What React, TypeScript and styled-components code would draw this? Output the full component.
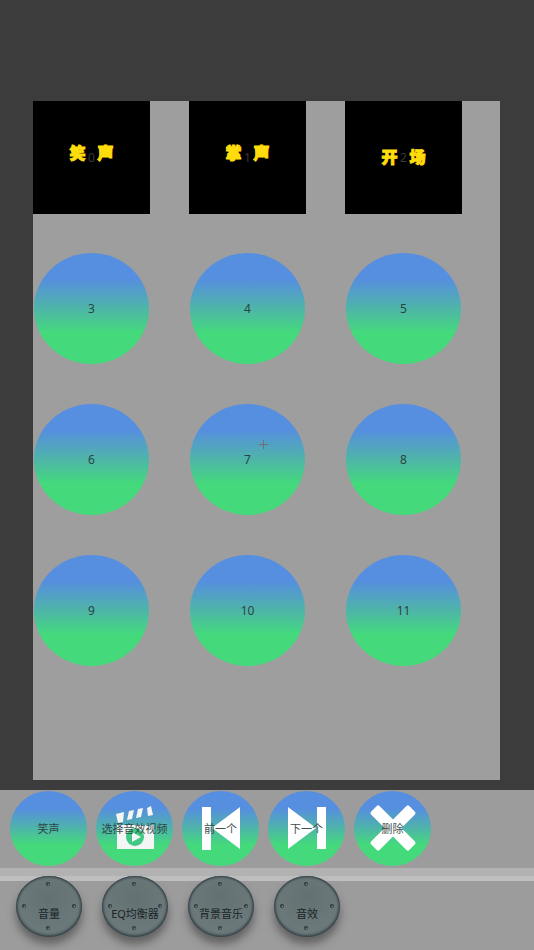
import React from 'react';
import styled, { createGlobalStyle } from 'styled-components';

const Global = createGlobalStyle`
  * { box-sizing: border-box; }
  body { margin: 0; background: #9c9c9c; font-family: "Noto Sans", "Noto Sans CJK SC", sans-serif; }
  button { border: 0; padding: 0; background: none; font: inherit; cursor: pointer; }
`;

const sky = 'linear-gradient(#568ee0 0%, #568ee0 23%, #4eb5a8 50%, #44da7c 72%, #44da7c 100%)';

const Page = styled.div`
  display: flex;
  flex-direction: column;
  min-height: 100vh;
`;

const Stage = styled.main`
  flex: 1;
  display: flex;
  padding: 101px 34px 10px 33px;
  background: #3c3c3c;
`;

const Panel = styled.section`
  flex: 1;
  background: #9e9e9e;
`;

const PadGrid = styled.div`
  display: grid;
  grid-template-columns: repeat(3, 1fr);
  gap: 38px 39px;
  padding-right: 38px;
`;

const Pad = styled.button<{ $video?: boolean }>`
  display: grid;
  place-items: center;
  position: relative;
  height: 113px;
  color: ${p => (p.$video ? '#3a3a3a' : '#29443f')};
  font-size: 12px;
  line-height: 16px;
  background: ${p => (p.$video ? '#000' : sky)};
  border: ${p => (p.$video ? 0 : 1)}px solid transparent;
  background-clip: padding-box;
  border-radius: ${p => (p.$video ? '0' : '50%')};
`;

const Title = styled.span<{ $low?: boolean }>`
  position: absolute;
  inset: ${p => (p.$low ? '45px' : '41px')} 0 auto;
  display: flex;
  justify-content: center;
  gap: 12px;
  color: #ffdc0c;
  font: 900 16px/20px "Noto Sans CJK SC", sans-serif;
  -webkit-text-stroke: 1px #ffdc0c;
`;

const Cross = styled.svg`
  position: absolute;
  left: 60%;
  top: 32%;
  width: 9px;
  height: 9px;
`;

const ActionBar = styled.div`
  display: flex;
  gap: 9px;
  height: 78px;
  padding: 1px 10px 2px;
  background: #9c9c9c;
`;

const Action = styled.button`
  display: grid;
  place-items: center;
  position: relative;
  width: 77px;
  height: 75px;
  border-radius: 50%;
  background: ${sky};
`;

const Icon = styled.svg`
  position: absolute;
  inset: 0;
  width: 100%;
  height: 100%;
`;

const Label = styled.span<{ $dark?: boolean }>`
  position: relative;
  color: ${p => (p.$dark ? '#11191b' : '#2b3a3a')};
  font-size: 11px;
  line-height: 16px;
  white-space: nowrap;
  opacity: 0.9;
`;

const Divider = styled.div`
  height: 8px;
  background: #b2b2b2;
`;

const KnobBar = styled.div`
  display: flex;
  gap: 20px;
  height: 74px;
  padding: 0 16px;
  background: linear-gradient(#bfbfbf 5px, #9c9c9c 5px);
`;

const Knob = styled.button`
  display: grid;
  place-items: center;
  position: relative;
  width: 66px;
  height: 61px;
  padding-top: 14px;
  border-radius: 50%;
  background: radial-gradient(circle at 50% 35%, #647173, #6e7b7d 80%);
  box-shadow: inset 0 0 2px 1px #364247, inset 0 -1px 3px 1px #465358, 0 7px 8px 0 rgba(50, 50, 50, 0.55);
`;

const pads = Array.from({ length: 12 }, (_, i) => i);
const titles = ['笑声', '掌声', '开场'];

const icons: Record<string, React.ReactNode> = {
  clap: (
    <g fill="#f4f6f5">
      <path d="M20 23 L28 21 L27 31 L22 32Z M33 20 L38 19 L36 28 L31 29Z M42 18 L47 17 L45 26 L40 27Z M51 17 L55 15 L57 24 L52 25Z" />
      <path d="M21 34H58V58H21Z" />
      <circle cx="39" cy="46" r="9" fill="#3fc984" />
      <path d="M36 41 L45 46 L36 51Z" />
    </g>
  ),
  prev: <path fill="#fff" d="M20 16H29V59H20Z M58 16V58L30 37Z" />,
  next: <path fill="#fff" d="M49 16H58V58H49Z M20 16V58L48 37Z" />,
  close: (
    <g fill="#fff" transform="translate(39 37)">
      <rect x="-27" y="-6" width="54" height="12" rx="2" transform="rotate(45)" />
      <rect x="-27" y="-6" width="54" height="12" rx="2" transform="rotate(-45)" />
    </g>
  ),
};

const actions = [
  { label: '笑声' },
  { label: '选择音效视频', icon: 'clap' },
  { label: '前一个', icon: 'prev' },
  { label: '下一个', icon: 'next' },
  { label: '删除', icon: 'close' },
];

const knobs = ['音量', 'EQ均衡器', '背景音乐', '音效'];
const screws = [[32, 8], [8, 30], [58, 30], [32, 52]];

export default function App() {
  return (
    <Page>
      <Global />
      <Stage>
        <Panel>
          <PadGrid>
            {pads.map(n => (
              <Pad key={n} $video={n < 3}>
                {n < 3 && (
                  <Title $low={n === 2}>
                    {[...titles[n]].map(c => <span key={c}>{c}</span>)}
                  </Title>
                )}
                <span>{n}</span>
                {n === 7 && (
                  <Cross viewBox="0 0 9 9" aria-hidden="true">
                    <path d="M0 4.5H9M4.5 0V9" stroke="#716f70" />
                  </Cross>
                )}
              </Pad>
            ))}
          </PadGrid>
        </Panel>
      </Stage>
      <ActionBar>
        {actions.map(a => (
          <Action key={a.label}>
            {a.icon && <Icon viewBox="0 0 77 75" aria-hidden="true">{icons[a.icon]}</Icon>}
            <Label>{a.label}</Label>
          </Action>
        ))}
      </ActionBar>
      <Divider />
      <KnobBar>
        {knobs.map(k => (
          <Knob key={k}>
            <Icon viewBox="0 0 66 61" aria-hidden="true">
              {screws.map(([x, y]) => (
                <g key={`${x}-${y}`}>
                  <circle cx={x} cy={y} r="2" fill="#2d383c" />
                  <circle cx={x + 0.4} cy={y + 0.4} r="0.9" fill="#77868a" />
                </g>
              ))}
            </Icon>
            <Label $dark>{k}</Label>
          </Knob>
        ))}
      </KnobBar>
    </Page>
  );
}
